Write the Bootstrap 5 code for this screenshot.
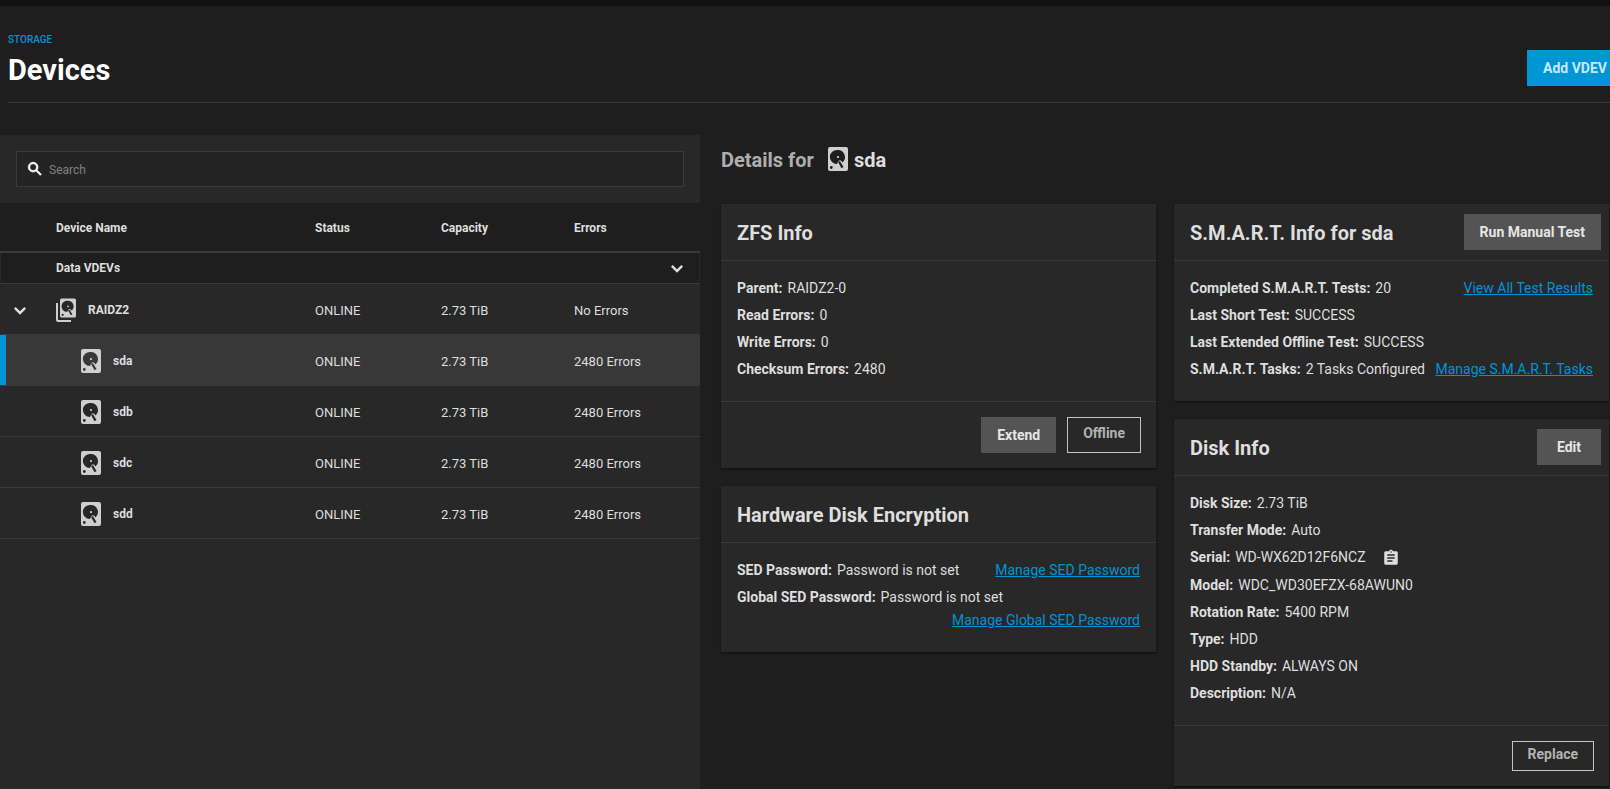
<!DOCTYPE html>
<html lang="en" data-bs-theme="dark">
<head>
<meta charset="utf-8">
<meta name="viewport" content="width=device-width, initial-scale=1">
<title>Devices</title>
<link rel="stylesheet" href="https://cdn.jsdelivr.net/npm/bootstrap@5.3.0/dist/css/bootstrap.min.css">
<style>
  :root { --line: #3a3a3a; --panel: #282828; --page: #1e1e1e; --accent: #0095d5; --fg: #dedede; }
  body { background: var(--page); color: var(--fg); font-family: Roboto, "Liberation Sans", sans-serif; font-size: 14px; line-height: 21px; }
  a { color: var(--accent); }
  svg { display: block; flex: none; fill: currentColor; }
  .top-strip { height: 6px; background: #111; }
  .page-head { margin-left: 8px; height: 97px; padding-top: 24px; border-bottom: 1px solid var(--line); }
  .crumb { font-size: 10px; line-height: 20px; font-weight: 500; text-decoration: none; text-transform: uppercase; }
  h1 { font-size: 29px; line-height: 40px; font-weight: 700; color: #fff; margin: 0; }
  h2, h3 { font-size: 20px; line-height: 28px; font-weight: 700; margin: 0; color: var(--fg); }
  h3 { padding-top: 2px; }
  .btn { --bs-btn-border-radius: 0; --bs-btn-font-size: 14px; --bs-btn-font-weight: 700; --bs-btn-padding-x: 15px; --bs-btn-padding-y: 0; height: 36px; white-space: nowrap; }
  .btn-accent { --bs-btn-bg: var(--accent); --bs-btn-color: #c9e8f6; --bs-btn-hover-bg: #0083bc; --bs-btn-border-color: transparent; margin-top: 20px; padding-right: 2px; }
  .btn-grey { --bs-btn-bg: #545454; --bs-btn-color: #e6e6e6; --bs-btn-hover-bg: #636363; --bs-btn-border-color: transparent; min-width: 64px; }
  .btn-line { --bs-btn-color: #b3b3b3; --bs-btn-border-color: #c4c4c4; --bs-btn-hover-bg: #333; padding-bottom: 3px; }
  .btn-short { height: 30px; }

  .workspace { display: grid; grid-template-columns: 175fr 222fr; column-gap: 21px; margin-top: 32px; padding-right: 1px; flex: 1; }
  .device-pane { background: var(--panel); font-size: 12px; min-width: 0; }
  .search-box { margin: 16px; height: 36px; border: 1px solid var(--line); background: #242424; color: #fff; padding-left: 9px; gap: 5px; }
  .search-box input { background: none; border: 0; outline: 0; flex: 1; color: var(--fg); font-size: 12px; padding: 2px 0 0; }
  .search-box input::placeholder { color: #808080; opacity: 1; }
  .devices { width: 100%; table-layout: fixed; border-collapse: separate; border-spacing: 0; }
  .devices td, .devices th { vertical-align: middle; padding: 0; }
  .devices thead th { height: 50px; padding-top: 2px; background: var(--page); border-bottom: 2px solid var(--line); }
  .devices tbody td, .devices tbody th { height: 51px; border-bottom: 1px solid var(--line); padding-top: 2px; }
  .devices tbody td { font-size: 13px; }
  .devices .group th { height: 31px; background: var(--page); border-inline: 1px solid var(--panel); padding: 1px 16px 0 55px; }
  .devices .chosen > * { background: #383838; }
  .devices .chosen td:first-child { box-shadow: inset 6px 0 var(--accent); }
  .c-toggle { width: 8%; } .c-name { width: 37%; } .c-status { width: 18%; } .c-cap { width: 19%; }
  .devname { gap: 12px; }
  .devname svg, .details-title svg { color: #cfcfcf; }
  .child { padding-left: 25px; }
  .chev { border: 0; background: none; color: var(--fg); padding: 0; }
  .row-chev { padding-left: 14px; }

  .details { min-width: 0; }
  .details-title { height: 69px; padding-top: 11px; }
  .disk-tag { margin: 1px 6px 0 14px; }
  .info-grid { display: grid; grid-template-columns: minmax(0, 1fr) minmax(0, 1fr); gap: 18px; align-items: start; }
  .stack { display: grid; gap: 18px; }
  .panel { background: var(--panel); box-shadow: 0 1px 2px #0009; }
  .panel-head { height: 57px; border-bottom: 1px solid var(--line); padding: 0 8px 0 16px; }
  .panel-main { padding: 17px 16px 15px; }
  .panel-foot { border-top: 1px solid var(--line); padding: 15px; gap: 11px; }
  .fact { min-height: 27px; padding: 0 0 6px; }
  .fact dt { margin-right: 5px; white-space: nowrap; }
  .fact dd { margin: 0; }
  .below { padding-top: 2px; }
  .copy { height: 22px; }
</style>
</head>
<body class="d-flex flex-column min-vh-100">
<svg class="d-none" aria-hidden="true">
  <symbol id="disk" viewBox="0 0 20 24"><path fill-rule="evenodd" d="M2 0h16a2 2 0 0 1 2 2v20a2 2 0 0 1-2 2H2a2 2 0 0 1-2-2V2a2 2 0 0 1 2-2Zm8 3a7 7 0 1 0-1 13.900l1.400-2.900 1.600-.8 1.500.8.900 1.400A7 7 0 0 0 10 3Zm0 6a1.100 1.100 0 1 1 0 2.200A1.100 1.100 0 0 1 10 9Zm.8 5.200-.6 1 3.300 6 2-1.200-3.500-5.800ZM3.300 19.100a1.400 1.400 0 1 0 0 2.800 1.400 1.400 0 0 0 0-2.800Z"/></symbol>
  <symbol id="disks" viewBox="0 0 20 24"><path d="M0 5h2v17h13v2H2a2 2 0 0 1-2-2Z"/><use href="#disk" x="4" y="0" width="16" height="20"/></symbol>
  <symbol id="chevron" viewBox="0 0 12 8"><path d="M1.700 0 6 4.200 10.300 0 12 1.700l-6 6-6-6Z"/></symbol>
</svg>

<div class="top-strip"></div>
<header class="page-head d-flex justify-content-between">
  <div>
    <a class="crumb d-block" href="#">Storage</a>
    <h1>Devices</h1>
  </div>
  <button type="button" class="btn btn-accent">Add VDEV</button>
</header>

<main class="workspace">
  <section class="device-pane">
    <label class="search-box d-flex align-items-center">
      <svg width="18" height="18" viewBox="0 0 24 24" aria-hidden="true"><path stroke="currentColor" d="M15.500 14h-.79l-.28-.27A6.471 6.471 0 0 0 16 9.500 6.500 6.500 0 1 0 9.500 16c1.610 0 3.090-.59 4.230-1.570l.27.28v.79l5 4.990L20.490 19l-4.990-5zm-6 0C7.010 14 5 11.990 5 9.500S7.010 5 9.500 5 14 7.010 14 9.500 11.990 14 9.500 14z"/></svg>
      <input type="search" placeholder="Search" aria-label="Search">
    </label>
    <table class="devices">
      <colgroup><col class="c-toggle"><col class="c-name"><col class="c-status"><col class="c-cap"><col></colgroup>
      <thead><tr><th></th><th>Device Name</th><th>Status</th><th>Capacity</th><th>Errors</th></tr></thead>
      <tbody>
        <tr class="group"><th colspan="5"><div class="d-flex justify-content-between align-items-center"><span>Data VDEVs</span><button type="button" class="chev" aria-label="Collapse group"><svg width="12" height="8"><use href="#chevron"/></svg></button></div></th></tr>
        <tr><td><button type="button" class="chev row-chev" aria-label="Collapse RAIDZ2"><svg width="12" height="8"><use href="#chevron"/></svg></button></td>
          <th><div class="devname d-flex align-items-center"><svg width="20" height="24"><use href="#disks"/></svg>RAIDZ2</div></th><td>ONLINE</td><td>2.73 TiB</td><td>No Errors</td></tr>
        <tr class="chosen"><td></td><th><div class="devname child d-flex align-items-center"><svg width="20" height="24"><use href="#disk"/></svg>sda</div></th><td>ONLINE</td><td>2.73 TiB</td><td>2480 Errors</td></tr>
        <tr><td></td><th><div class="devname child d-flex align-items-center"><svg width="20" height="24"><use href="#disk"/></svg>sdb</div></th><td>ONLINE</td><td>2.73 TiB</td><td>2480 Errors</td></tr>
        <tr><td></td><th><div class="devname child d-flex align-items-center"><svg width="20" height="24"><use href="#disk"/></svg>sdc</div></th><td>ONLINE</td><td>2.73 TiB</td><td>2480 Errors</td></tr>
        <tr><td></td><th><div class="devname child d-flex align-items-center"><svg width="20" height="24"><use href="#disk"/></svg>sdd</div></th><td>ONLINE</td><td>2.73 TiB</td><td>2480 Errors</td></tr>
      </tbody>
    </table>
  </section>

  <section class="details">
    <h2 class="details-title d-flex"><span class="opacity-75">Details for</span><svg class="disk-tag" width="20" height="24"><use href="#disk"/></svg>sda</h2>
    <div class="info-grid">
      <div class="stack">
        <article class="panel">
          <div class="panel-head d-flex align-items-center"><h3>ZFS Info</h3></div>
          <dl class="panel-main mb-0">
            <div class="fact d-flex"><dt>Parent:</dt><dd>RAIDZ2-0</dd></div>
            <div class="fact d-flex"><dt>Read Errors:</dt><dd>0</dd></div>
            <div class="fact d-flex"><dt>Write Errors:</dt><dd>0</dd></div>
            <div class="fact d-flex"><dt>Checksum Errors:</dt><dd>2480</dd></div>
          </dl>
          <div class="panel-foot d-flex justify-content-end"><button type="button" class="btn btn-grey">Extend</button><button type="button" class="btn btn-line">Offline</button></div>
        </article>
        <article class="panel">
          <div class="panel-head d-flex align-items-center"><h3>Hardware Disk Encryption</h3></div>
          <dl class="panel-main mb-0">
            <div class="fact d-flex"><dt>SED Password:</dt><dd>Password is not set</dd><dd class="ms-auto"><a href="#">Manage SED Password</a></dd></div>
            <div class="fact d-flex flex-wrap"><dt>Global SED Password:</dt><dd>Password is not set</dd><dd class="w-100 text-end below"><a href="#">Manage Global SED Password</a></dd></div>
          </dl>
        </article>
      </div>
      <div class="stack">
        <article class="panel">
          <div class="panel-head d-flex align-items-center justify-content-between"><h3>S.M.A.R.T. Info for sda</h3><button type="button" class="btn btn-grey">Run Manual Test</button></div>
          <dl class="panel-main mb-0">
            <div class="fact d-flex"><dt>Completed S.M.A.R.T. Tests:</dt><dd>20</dd><dd class="ms-auto"><a href="#">View All Test Results</a></dd></div>
            <div class="fact d-flex"><dt>Last Short Test:</dt><dd>SUCCESS</dd></div>
            <div class="fact d-flex"><dt>Last Extended Offline Test:</dt><dd>SUCCESS</dd></div>
            <div class="fact d-flex"><dt>S.M.A.R.T. Tasks:</dt><dd>2 Tasks Configured</dd><dd class="ms-auto"><a href="#">Manage S.M.A.R.T. Tasks</a></dd></div>
          </dl>
        </article>
        <article class="panel">
          <div class="panel-head d-flex align-items-center justify-content-between"><h3>Disk Info</h3><button type="button" class="btn btn-grey">Edit</button></div>
          <dl class="panel-main mb-0">
            <div class="fact d-flex"><dt>Disk Size:</dt><dd>2.73 TiB</dd></div>
            <div class="fact d-flex"><dt>Transfer Mode:</dt><dd>Auto</dd></div>
            <div class="fact d-flex"><dt>Serial:</dt><dd>WD-WX62D12F6NCZ</dd><dd class="copy d-flex align-items-center"><button type="button" class="chev ms-3" aria-label="Copy serial"><svg width="18" height="18" viewBox="0 0 24 24"><path d="M19 3h-4.180C14.400 1.840 13.300 1 12 1c-1.300 0-2.400.84-2.820 2H5c-1.100 0-2 .9-2 2v14c0 1.100.9 2 2 2h14c1.100 0 2-.9 2-2V5c0-1.100-.9-2-2-2zm-7 0c.55 0 1 .45 1 1s-.45 1-1 1-1-.45-1-1 .45-1 1-1zm2 14H7v-2h7v2zm3-4H7v-2h10v2zm0-4H7V7h10v2z"/></svg></button></dd></div>
            <div class="fact d-flex"><dt>Model:</dt><dd>WDC_WD30EFZX-68AWUN0</dd></div>
            <div class="fact d-flex"><dt>Rotation Rate:</dt><dd>5400 RPM</dd></div>
            <div class="fact d-flex"><dt>Type:</dt><dd>HDD</dd></div>
            <div class="fact d-flex"><dt>HDD Standby:</dt><dd>ALWAYS ON</dd></div>
            <div class="fact d-flex"><dt>Description:</dt><dd>N/A</dd></div>
          </dl>
          <div class="panel-foot d-flex justify-content-end"><button type="button" class="btn btn-line btn-short">Replace</button></div>
        </article>
      </div>
    </div>
  </section>
</main>
<script src="https://cdn.jsdelivr.net/npm/bootstrap@5.3.0/dist/js/bootstrap.bundle.min.js"></script>
</body>
</html>
